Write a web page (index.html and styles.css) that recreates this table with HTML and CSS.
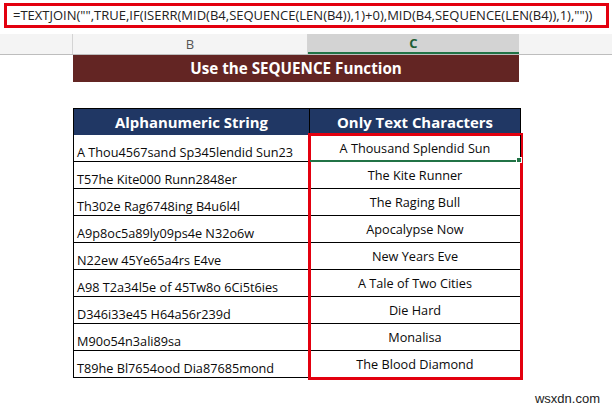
FILE: index.html
```html
<!DOCTYPE html>
<html>
<head>
<meta charset="utf-8">
<link rel="stylesheet" href="styles.css">
</head>
<body>
<div class="formula">=TEXTJOIN("",TRUE,IF(ISERR(MID(B4,SEQUENCE(LEN(B4)),1)+0),MID(B4,SEQUENCE(LEN(B4)),1),""))</div>
<div class="colheads">
  <div class="ch rowhead"></div>
  <div class="ch colb">B</div>
  <div class="ch colc">C</div>
  <div class="ch rest"></div>
</div>
<div class="title">Use the SEQUENCE Function</div>
<div class="table">
  <div class="col col-b">
    <div class="th">Alphanumeric String</div>
    <div class="td">A Thou4567sand Sp345lendid Sun23</div>
    <div class="td">T57he Kite000 Runn2848er</div>
    <div class="td">Th302e Rag6748ing B4u6l4l</div>
    <div class="td">A9p8oc5a89ly09ps4e N32o6w</div>
    <div class="td">N22ew 45Ye65a4rs E4ve</div>
    <div class="td">A98 T2a34l5e of 45Tw8o 6Ci5t6ies</div>
    <div class="td">D346i33e45 H64a56r239d</div>
    <div class="td">M90o54n3ali89sa</div>
    <div class="td">T89he Bl7654ood Dia87685mond</div>
  </div>
  <div class="col col-c">
    <div class="th">Only Text Characters</div>
    <div class="result">
      <div class="td active">A Thousand Splendid Sun</div>
      <div class="td">The Kite Runner</div>
      <div class="td">The Raging Bull</div>
      <div class="td">Apocalypse Now</div>
      <div class="td">New Years Eve</div>
      <div class="td">A Tale of Two Cities</div>
      <div class="td">Die Hard</div>
      <div class="td">Monalisa</div>
      <div class="td">The Blood Diamond</div>
    </div>
  </div>
</div>
<div class="watermark">wsxdn.com</div>
</body>
</html>
```
FILE: styles.css
```css
html, body {
  margin: 0;
  padding: 0;
}
body {
  width: 612px;
  height: 411px;
  overflow: hidden;
  background: #ffffff;
  font-family: "Open Sans", "Liberation Sans", sans-serif;
  color: #111;
}
.formula {
  margin: 3px 0 0 4px;
  width: 605px;
  height: 25px;
  box-sizing: border-box;
  border: 3px solid #e3000f;
  padding-left: 6px;
  font-size: 13px;
  line-height: 18px;
  white-space: nowrap;
  overflow: hidden;
  color: #222;
}
.colheads {
  margin-top: 6px;
  display: flex;
  height: 21px;
  box-sizing: border-box;
  border-bottom: 1px solid #bdbdbd;
  background: #f4f4f4;
}
.ch {
  box-sizing: border-box;
  height: 20px;
  font-size: 13px;
  line-height: 20px;
  text-align: center;
  color: #555;
}
.rowhead {
  width: 73px;
  border-right: 1px solid #d4d4d4;
}
.colb {
  width: 235px;
  border-right: 1px solid #d4d4d4;
}
.colc {
  width: 211px;
  background: #d3d3d3;
  border-bottom: 2px solid #217346;
  color: #1d5e35;
  font-weight: 700;
  line-height: 19px;
}
.rest {
  flex: 1;
}
.title {
  margin-left: 73px;
  width: 446px;
  height: 27px;
  background: #632523;
  color: #ffffff;
  font-weight: 700;
  font-size: 15.2px;
  line-height: 27px;
  text-align: center;
}
.table {
  display: flex;
  margin: 26px 0 0 73px;
}
.col {
  display: flex;
  flex-direction: column;
}
.col-b {
  width: 235px;
  border-left: 1px solid #000;
  border-right: 1px solid #000;
}
.col-c {
  width: 211px;
}
.th {
  height: 27px;
  box-sizing: border-box;
  background: #203764;
  border-top: 1px solid #000;
  color: #fff;
  font-weight: 700;
  font-size: 14.9px;
  line-height: 26px;
  text-align: center;
}
.col-c .th {
  border-right: 1px solid #000;
}
.td {
  height: 27px;
  box-sizing: border-box;
  border-bottom: 1px solid #000;
  font-size: 12.7px;
  white-space: nowrap;
  color: #0a0a0a;
}
.col-b .td {
  padding: 8px 0 0 3px;
  line-height: 18px;
}
.col-c .td {
  text-align: center;
  line-height: 26px;
  border-right: 1px solid #000;
}
.result {
  display: flex;
  flex-direction: column;
  outline: 3px solid #e3000f;
  outline-offset: -1px;
}
.col-c .td.active {
  position: relative;
  border-bottom: 2px solid #217346;
}
.col-c .td.active::after {
  content: "";
  position: absolute;
  right: -2px;
  bottom: -3px;
  width: 4px;
  height: 4px;
  background: #217346;
  border: 1px solid #fff;
}
.watermark {
  margin-top: 13px;
  padding-right: 12px;
  text-align: right;
  font-family: "Liberation Sans", sans-serif;
  font-size: 13px;
  color: #222;
}
```
